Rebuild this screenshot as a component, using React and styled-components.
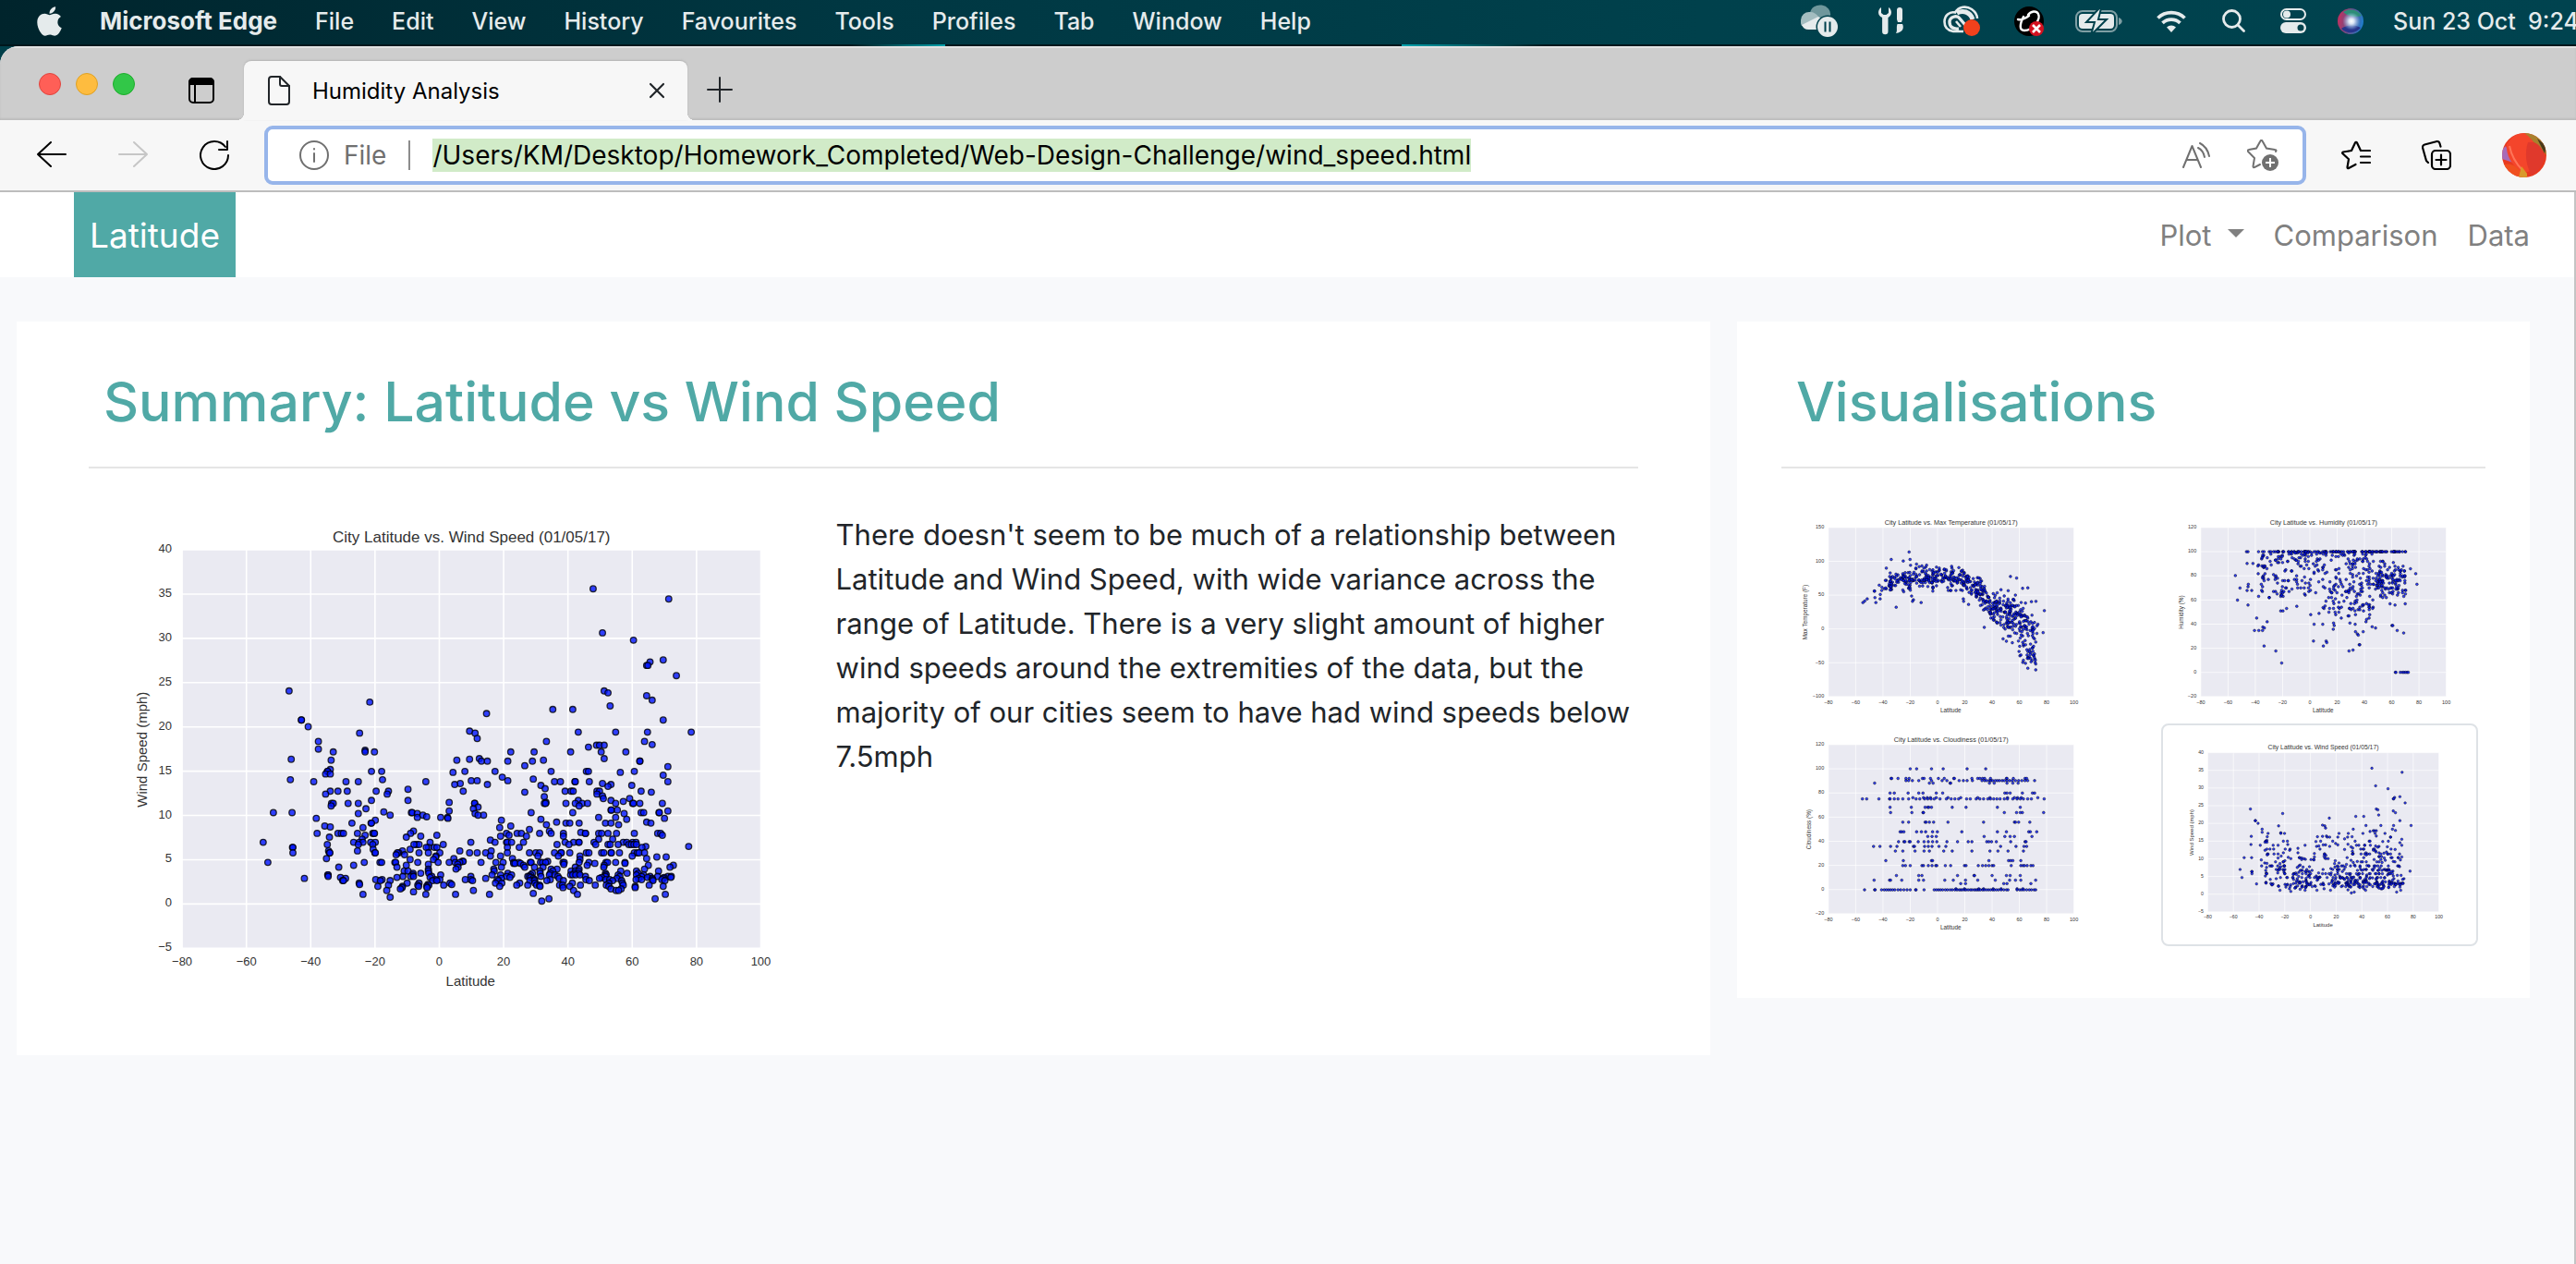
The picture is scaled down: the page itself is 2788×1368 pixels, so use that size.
import React from "react";
import styled, { createGlobalStyle } from "styled-components";
import { FaApple } from "react-icons/fa";

const GlobalStyle = createGlobalStyle`
  *, *::before, *::after { box-sizing: border-box; }
  body {
    margin: 0;
    background: #003f49;
    font-family: Inter, Roboto, "Liberation Sans", sans-serif;
    color: #212529;
  }
  button { font: inherit; color: inherit; background: none; border: 0; padding: 0; cursor: pointer; }
  svg { display: block; flex: none; }
`;

/* ---------- macOS menu bar ---------- */

const Desktop = styled.div`
  display: flex;
  flex-direction: column;
  min-height: 100vh;
`;

const MenuBar = styled.header`
  display: flex;
  align-items: center;
  height: 50px;
  padding: 0 0 5px 40px;
  overflow: hidden;
  color: #e5ebec;
  font-size: 25px;
  background:
    linear-gradient(90deg, #00171c 0 33%, #00a3ad 36.7%, #00171c 36.7% 54.4%, #00a3ad 54.4%, #00171c 60%) bottom / 100% 2px no-repeat,
    linear-gradient(90deg, #00242c, #003742 33%, #00414c 66%, #00434f);
`;

const MenuList = styled.nav`
  display: flex;
  align-items: center;
  gap: 41px;
`;

const MenuItem = styled.button`
  font-size: ${(p) => (p.$strong ? "26px" : "25px")};
  font-weight: ${(p) => (p.$strong ? 700 : 500)};
  white-space: nowrap;
`;

const AppleLogo = styled(FaApple)`
  width: 27px;
  height: 36px;
`;

const StatusArea = styled.div`
  display: flex;
  align-items: center;
  flex: none;
  margin-left: auto;
`;

const StatusIcons = styled.div`
  display: flex;
  align-items: center;
  gap: 34px;
  margin-right: 32px;
`;

const Clock = styled.time`
  width: 198px;
  overflow: hidden;
  white-space: pre;
  font-weight: 500;
`;

/* ---------- Browser chrome ---------- */

const BrowserWindow = styled.div`
  display: flex;
  flex-direction: column;
  flex: 1;
  overflow: hidden;
  border-top-left-radius: 20px;
  background: #f8f9fb;
`;

const TabStrip = styled.div`
  display: flex;
  align-items: flex-end;
  height: 80px;
  background: #cdcdcd;
  box-shadow: inset 0 2px 0 #e2e2e2, inset 0 -2px 2px #bdbdbd;
`;

const TrafficLights = styled.div`
  display: flex;
  gap: 16px;
  padding: 0 58px 27px 42px;
`;

const Light = styled.button`
  width: 24px;
  height: 24px;
  border-radius: 50%;
  background: ${(p) => p.$fill};
  border: 1px solid ${(p) => p.$ring};
`;

const StripButton = styled.button`
  display: flex;
  padding: ${(p) => p.$pad};
`;

const Tab = styled.div`
  position: relative;
  display: flex;
  align-items: center;
  width: 480px;
  height: 64px;
  padding: 0 24px 0 26px;
  border-radius: 8px 8px 0 0;
  background: #f7f7f7;
  box-shadow: 0 -1px 2px #b4b4b4;
  &::before, &::after {
    content: "";
    position: absolute;
    bottom: 0;
    width: 8px;
    height: 8px;
  }
  &::before { left: -8px; background: radial-gradient(circle at 0 0, transparent 8px, #f7f7f7 8px); }
  &::after { right: -8px; background: radial-gradient(circle at 100% 0, transparent 8px, #f7f7f7 8px); }
`;

const TabTitle = styled.span`
  flex: 1;
  padding-left: 24px;
  color: #000;
  font-size: 24px;
  white-space: nowrap;
`;

const Toolbar = styled.div`
  display: flex;
  align-items: center;
  height: 78px;
  padding: 0 32px 0 40px;
  background: #f7f7f7;
  border-bottom: 2px solid #bdbdbd;
  color: #000;
`;

const ToolGroup = styled.div`
  display: flex;
  align-items: center;
  gap: ${(p) => p.$gap};
`;

const AddressBar = styled.div`
  display: flex;
  align-items: center;
  flex: 1;
  height: 64px;
  margin: 0 38px;
  padding: 0 26px 0 34px;
  border: 4px solid #97b5ea;
  border-radius: 9px;
  background: #fff;
  color: #707070;
  font-size: 28px;
`;

const Scheme = styled.span`
  margin: 0 24px 0 16px;
  padding-right: 24px;
  border-right: 2px solid #8c8c8c;
  line-height: 32px;
`;

const UrlInput = styled.input`
  field-sizing: content;
  max-width: 100%;
  height: 36px;
  margin-right: auto;
  padding: 0;
  border: 0;
  outline: 0;
  background: #d1ebc8;
  color: #000;
  font: inherit;
  font-size: 28px;
`;

const Avatar = styled.button`
  display: flex;
  border-radius: 50%;
  overflow: hidden;
`;

/* ---------- Web page ---------- */

const Page = styled.div`
  flex: 1;
  border-right: 2px solid #c4c4c4;
  background: #f8f9fb;
`;

const Navbar = styled.nav`
  display: flex;
  justify-content: space-between;
  height: 92px;
  padding: 0 48px 0 80px;
  background: #fff;
`;

const Brand = styled.a`
  display: flex;
  align-items: center;
  padding: 0 17px;
  background: #50a9a6;
  color: #fff;
  font-size: 37px;
  text-decoration: none;
`;

const NavLinks = styled.div`
  display: flex;
  align-items: center;
  gap: 32px;
  color: #808080;
  font-size: 31px;
`;

const NavLink = styled.a`
  color: inherit;
  text-decoration: none;
`;

const NavDropdown = styled.button`
  display: flex;
  align-items: center;
  gap: 17px;
  &::after {
    content: "";
    margin-bottom: 4px;
    border: 9px solid transparent;
    border-top-color: currentColor;
    border-bottom: 0;
  }
`;

const Content = styled.main`
  display: grid;
  grid-template-columns: 47fr 22fr;
  align-items: start;
  gap: 29px;
  padding: 48px 48px 48px 18px;
`;

const Card = styled.section`
  padding: ${(p) => p.$pad};
  background: #fff;
`;

const CardTitle = styled.h1`
  margin: 0;
  padding: 0 16px 32px;
  border-bottom: 2px solid #e5e5e5;
  color: #50a9a6;
  font-size: 59px;
  font-weight: 500;
  line-height: 77px;
  white-space: nowrap;
`;

const SummaryBody = styled.div`
  display: grid;
  grid-template-columns: 27fr 29fr;
  align-items: start;
  padding-top: 34px;
`;

const SummaryText = styled.p`
  margin: 0;
  padding-top: 14px;
  font-size: 31px;
  line-height: 48px;
`;

const Gallery = styled.div`
  display: grid;
  grid-template-columns: 1fr 1fr;
  align-items: start;
  gap: 6px 60px;
  padding: 41px 8px 0;
`;

const PlotLink = styled.a`
  display: block;
  ${(p) => p.$current && `
    padding: 8px 8px 14px;
    border: 2px solid #dee2e6;
    border-radius: 8px;
  `}
`;

const ChartSvg = styled.svg`
  width: 100%;
  height: auto;
  font-family: "Liberation Sans", Arial, sans-serif;
  fill: #333;
`;

/* ---------- Plot data ---------- */

// Rows map a vertical grid position to the horizontal grid positions on it.
const expand = (rows) =>
  rows.split(";").flatMap((row) => {
    const [y, xs] = row.trim().split(":");
    return xs.split(",").map((x) => [Number(x), Number(y)]);
  });

// Park-Miller generator, so that the jitter is the same on every render.
const randomFrom = (seed) => () => {
  seed = (seed * 16807) % 2147483647;
  return seed / 2147483647;
};

const wind = {
  frame: [148, 1511, 132, 1380],
  points: expand(`254:1116;286:1294;392:1138;415:1211;477:1281;483:1250;494:1242,1245;526:1312;574:400,1142;580:1151;589:1242;603:1255;609:590;621:1156;
632:1021,1068;645:865;665:429,429,1281;686:445;700:825;703:1081,1169,1244,1347;706:566,838;723:843;732:469,1006,1237;742:1255;744:1124,1131,1142;
750:1105;756:469;760:579;765:504,579,601,922,977,1063,1135,1193;788:405,825;786:848,1142;791:499,795,999;794:853,867,915,973,1226,1226;808:955;811:1292;
820:497;826:490,491,594,618,814,885,1017,1100,1105,1213;829:786,1180;834:486,497;838:1281;844:902;850:975;852:403,620;855:829,843,915;
858:458,534,563,722,1025,1039,1073,1074,1107,1292;864:803,1138;867:790,867,1158;870:993,1207;873:1151;880:1003;882:680;
888:497,515,537,605,634,810,1050,1064,1069,1125,1131,1229;891:955,1253;897:486,631,1125;903:1138;905:1001;911:1202,1140;917:594,680,1081,1158;920:1187;
923:777,1005;926:500,504,539,563,837,837,1001,1004,1052,1074,1090,1103,1169,1209,1211,1226,1279;934:499,1083;938:845;943:581,834;947:1158,1159,1173;950:777,1292;953:623;
955:363,407,688,690,970,1068,1229,1235,1271,1272;958:563,702,838,1189;963:638,715,858,845;968:724;970:757,773,702,1129,1169;973:464,774,1284;976:993,1195;
979:603,900;985:1030,1242;988:548,593,594,1052,1061,1083,1145,1158,1252;993:1006,1176;997:484,922;1000:497;1002:574,896;1008:966;1013:693,1013;1017:1087;
1020:466,515,523,528,561,597,600,601,686,912,937,947,990,1017,1046,1098,1098,1129,1136,1151,1171,1213,1268,1275;1026:579,748,918,1279;1029:710,898,959,1046;
1032:495,676;1038:572,1129,1162;1041:874;1048:339,552,565,574,592,603,732,828,885,912,914,924,952,1050,1070,1082,1083,1118,1187,1195,1209,1217;
1055:490,563,597,700,706,763,694,1031,1059,1122,1151,1156,1175,1200,1206,1212,1218;1061:1341,1240;1064:408,409,728,742,748,723,914,942,1231;1070:598,685;1075:493,561,667,802,876;
1081:409,495,496,602,603,658,655,706,728,755,825,843,863,914,966,981,990,1025,1040,1041,1061,1100,1106,1136,1141,1158,1159,1178,1213,1220,1224,1237;
1087:652,672;1091:746,874,898,986,1034,1085,1208;1094:1288,1266,745;1099:488,788,926,1242;1102:685,740,1085;1108:808,810,1009;
1111:350,577,614,618,649,651,703,751,777,791,802,852,887,904,929,941,968,970,992,997,1004,1045,1048,1083,1106,1146,1150,1169,1191;1114:929,932,945,1191,1120;
1117:728,797,1047;1120:552,676,952,1102,1142,1246,1305;1126:517,654,798,900,955,978,998,1074,1141,1297;1132:793,882,1017,1031,1083,1237,728;
1138:671,680,728,883,991,1021,1064,1074,1082,1181,1218,1270;1145:710,729,915,973,991,1015,1072,1082,1145,1196,1222,692;
1150:491,492,691,757,878,898,924,969,1013,1026,1063,1068,1075,1085,1145,1147,1175,1218,1235;1155:492,668,686,693,736,828,912,962,966,993,1033,1098,1145,1179,1230,1250,1268,1292,1300;
1158:521,654,732,920,969,1136,1244,1283,1299;1161:436,533,863,900,975,1036,1131,1172,1223,1281,1255;1165:604,619,745,755,815,828,890,978,1015,1099,1146,1155,1217,1230,1256,1278;
1168:526,528,615,638,738,748,832,893,967,978,1007,1046,1107,1162,1183,1257,1285;1176:565,678,706,779,886,901,943,979,1067,1153,1185;
1180:566,727,783;1182:634,703,729,764,936,962,983,990,1037,1044,1086,1121,1147,1187,1248;1186:609,667,705,724,896,991,1061,1153,1215,1281;1190:666,725,1045,1215;1194:662,1158,1182;
1199:630,1070,1170,1176,834;1203:693;1208:975;1211:574,722,792,872,1079,1286;1220:638;1225:1012,1262;1232:995`),
};

const latitudes = wind.points.map(([x]) => (x - 148) / 7.572 - 80);

const interpolate = (stops, at) => {
  const i = Math.max(1, stops.findIndex(([x]) => x >= at));
  const [x0, a0, b0] = stops[i - 1];
  const [x1, a1, b1] = stops[i];
  const t = (at - x0) / (x1 - x0);
  return [a0 + (a1 - a0) * t, b0 + (b1 - b0) * t];
};

const temperature = (() => {
  const rand = randomFrom(42);
  const trend = [
    [-60, 40, 6], [-47, 55, 8], [-35, 68, 16], [-22, 76, 20], [-8, 76, 20], [0, 78, 16], [18, 76, 18], [28, 62, 22],
    [34, 46, 30], [42, 32, 32], [50, 22, 36], [58, 12, 44], [66, 4, 60], [72, -12, 64], [80, 5, 30],
  ];
  const spread = latitudes
    .filter((lat) => lat > -42 && lat < 73)
    .map((lat) => {
      const [mid, range] = interpolate(trend, lat);
      const noise = (rand() + rand() + rand()) / 1.5 - 1;
      return [120 + (lat + 80) * 4.428, 389.5 - (mid + noise * range * 1.2) * 2.18];
    });
  const outliers = expand(`141:382;165:324,385;170:363;180:406;193:308,404,430,480;248:285;265:293;267:270,269,459;288:271;304:274,232,421;292:246,288,558;299:238;
319:340;283:390;295:396;300:393,559;310:575;384:626;220:711;225:731;280:727;330:821;401:817;374:800;379:797;521:793;502:793;497:791,751;480:788,768,772;
490:753,781;495:778;421:687;473:745,765,784;445:741,786;440:760;265:509,516,518,534,555;250:520;461:773,784;411:769,782;484:766,770,776;428:737;432:751`);
  return { frame: [120, 917, 62, 607], points: [...spread, ...outliers] };
})();

const humidity = (() => {
  const rand = randomFrom(97);
  const saturated = latitudes
    .filter((lat, i) => lat > -30 && lat < 73 && i % 5 === 0)
    .map((lat) => [110 + (lat + 80) * 4.417, 140]);
  const spread = latitudes
    .filter((lat, i) => lat > -38 && lat < 71 && i % 4 !== 0)
    .map((lat) => {
      const r = rand();
      const low = lat < 8 ? Math.pow(r, lat < -14 ? 1 : 1.7) * 38 : lat < 48 ? r * 50 : 7 + rand() * 16 + r * 18;
      return [110 + (lat + 80) * 4.417, 140 + Math.round(low) * 3.89];
    });
  const listed = expand(`140:258,263,297,310,315,337;178:260,279;186:295,308,313,317;211:296,318;217:222;257:237;296:229;312:263;354:291,565,655;394:284,298,310,746;383:311;
386:316,676;366:325,645;444:315,507;460:353,590;499:372;331:369,376,637;323:388;316:421;265:260,275;245:264,810;253:263;343:466,547,611,657;
374:477,505,610;428:475,516;433:518;339:493;320:506;335:525,545,557;370:540,593;378:542,729,732;390:539;398:611,636;405:617;409:620;402:767;440:623,625;
457:603;327:625;382:665;358:647;211:806;195:789;308:772,723;312:739;347:587,590;529:740,742,756,763,768,773,778,782`);
  return { frame: [110, 905, 62, 607], points: [...saturated, ...spread, ...listed] };
})();

const cloudiness = {
  frame: [210, 672, 797, 1342],
  points: expand(`875:364,376,404,426,471,506;906:328,329,341,356,362,387,390,402,417,428,446,447,480,491,495,500,504,515,545,546,558,580,583;
913:356,361,368,380,404,424,433,456,464,471,481,499,504,508,513,516,519,524,528,532,537,541,546,551,556,562,568,574,580,585,598;
921:297,400,407,439,440,513,522,546,557,567;953:326,334,360,380,388,413,425,542,546,552,575,594,598;
968:369,389,396,402,413,435,459,491,514,547,560,566,573,604;972:274,282,305,325,326,334,341,350,361,375,382,391,397,403,409,420,432,441,448,455,470,477,488,495,502,510,515,521,527,533,541,547,557,565,571,577,585,592,616;
999:326,366,392,397,399,404,443,469,528,571;1016:327,367,388,389,541,564,571,575,615;1047:350,361,392,394,400,408,435,502,560,562,568,589;
1078:345,348,352,376,385,393,406,415,461,528,545,587,590,602;1093:397,405,413,503,542,552,560,593;1110:342,352,354,362,364,379,390,398,406,414,433,453,473,480,508,512,517,526,553,580,582;
1125:295,307,327,339,370,372,391,398,405,418,431,534,563,578,583;1140:336,350,373,390,400,427,443,480,514,529,548,577;1171:318,351,404,406,512,549,553,557,572;
1187:350,355,364,386,389,398,405,412,414,430,440,466,469,492,500,506,512,518,521,554,572,576,579,584,591,595;1219:338,380,386,453,484,485,518,545,552,571;
1234:296,325,327,348,380,389,429,445,468,491,524,551,562,572,600;1245:459,468,540,546,591;1262:450,466,493,502,520,535,565,576;
1265:278,297,298,310,315,319,323,327,331,335,341,346,352,358,364,374,375,390,409,413,417,421,425,430,434,439,443,448,452,456,459,462,466,469,473,477,480,484,487,490,493,496,500,503,507,511,515,519,522,526,530,535,540,545,548,565,570,574,578,583,588,592,597,600`),
};

const LAT_TICKS = [-80, -60, -40, -20, 0, 20, 40, 60, 80, 100];
const range = (from, to, step) =>
  Array.from({ length: (to - from) / step + 1 }, (_, i) => from + i * step);

const PLOTS = {
  temperature: { data: temperature, name: "Max Temperature", label: "Max Temperature (F)", labelX: 46, ticks: range(-100, 150, 50) },
  humidity: { data: humidity, name: "Humidity", label: "Humidity (%)", labelX: 56, ticks: range(-20, 120, 20) },
  cloudiness: { data: cloudiness, name: "Cloudiness", label: "Cloudiness (%)", labelX: 56, ticks: range(-20, 120, 20) },
  wind: { data: wind, name: "Wind Speed", label: "Wind Speed (mph)", labelX: 63, ticks: range(-5, 40, 5) },
};

const AREA = { x: 101, y: 54, w: 626, h: 431 };
const minus = (n) => String(n).replace("-", "−");

function ScatterPlot({ plot }) {
  const { data, name, label, labelX, ticks } = plot;
  const [x0, x1, y0, y1] = data.frame;
  const px = (x) => AREA.x + ((x - x0) / (x1 - x0)) * AREA.w;
  const py = (y) => AREA.y + ((y - y0) / (y1 - y0)) * AREA.h;
  const last = ticks.length - 1;
  return (
    <ChartSvg viewBox="0 0 808 539" role="img" aria-label={`City Latitude vs. ${name}`}>
      <rect x={AREA.x} y={AREA.y} width={AREA.w} height={AREA.h} fill="#eaeaf2" />
      <g stroke="#fff" strokeWidth="1.6">
        {LAT_TICKS.map((t, i) => {
          const x = AREA.x + (i / 9) * AREA.w;
          return <line key={t} x1={x} x2={x} y1={AREA.y} y2={AREA.y + AREA.h} />;
        })}
        {ticks.map((t, i) => {
          const y = AREA.y + AREA.h - (i / last) * AREA.h;
          return <line key={t} x1={AREA.x} x2={AREA.x + AREA.w} y1={y} y2={y} />;
        })}
      </g>
      <g fill="#0014ff" fillOpacity="0.8" stroke="#000" strokeOpacity="0.8" strokeWidth="1.3">
        {data.points.map(([x, y], i) => (
          <circle key={i} cx={px(x)} cy={py(y)} r="3.3" />
        ))}
      </g>
      <g fontSize="13" textAnchor="middle">
        {LAT_TICKS.map((t, i) => (
          <text key={t} x={AREA.x + (i / 9) * AREA.w} y="504">{minus(t)}</text>
        ))}
      </g>
      <g fontSize="13" textAnchor="end">
        {ticks.map((t, i) => (
          <text key={t} x="90" y={AREA.y + AREA.h - (i / last) * AREA.h + 3}>{minus(t)}</text>
        ))}
      </g>
      <g textAnchor="middle">
        <text x="414" y="46" fontSize="17">{`City Latitude vs. ${name} (01/05/17)`}</text>
        <text x="413" y="526" fontSize="15">Latitude</text>
        <text transform={`translate(${labelX} 270) rotate(-90)`} fontSize="15">{label}</text>
      </g>
    </ChartSvg>
  );
}

/* ---------- Icons ---------- */

const Line = ({ w, h, box, width = 2, children }) => (
  <svg width={w} height={h} viewBox={box || `0 0 ${w} ${h}`} fill="none" stroke="currentColor"
    strokeWidth={width} strokeLinecap="round" strokeLinejoin="round" aria-hidden="true">
    {children}
  </svg>
);

const CloudPausedIcon = () => (
  <svg width="50" height="36" viewBox="0 0 50 36" aria-hidden="true">
    <path d="M10 9a11 10 0 0 1 22 3v4L20 19z" fill="#6f979c" />
    <path d="M0 17a9 9 0 0 1 10-9c4 0 7 2 9 5l-7 7-11 3a9 9 0 0 1-1-6z" fill="#a3bdc0" />
    <path d="M1 22l18-9 10 7v7H9a8 8 0 0 1-8-5z" fill="#e5ebec" />
    <circle cx="29" cy="24" r="12.5" fill="#00414c" />
    <circle cx="29" cy="24" r="11" fill="#e5ebec" />
    <path d="M26.500 18.500v11M31.500 18.500v11" stroke="#00414c" strokeWidth="2" />
  </svg>
);

const ToolsIcon = () => (
  <svg width="36" height="30" viewBox="0 0 36 30" fill="#e5ebec" aria-hidden="true">
    <path d="M3 0v6l2.500 2h3L11 6V0c2 1 3 3.500 3 5.500C14 8.500 12 10 10.500 11v15a3.200 3.200 0 0 1-6.400 0V11C2 10 0 8.500 0 5.500 0 3.500 1 1 3 0z" />
    <path d="M20 3a3 3 0 0 1 6 0v10l-1 3h-4l-1-3zM20.500 18h5.500c2 4 .5 9-7 10 2-3 0-6 1.500-10z" />
  </svg>
);

const CreativeCloudIcon = () => (
  <svg width="43" height="34" viewBox="0 0 43 34" aria-hidden="true">
    <g fill="none" stroke="#e5ebec" strokeWidth="2.600">
      <path d="M22 28H11C5 27 1.500 23 1.500 17.500 1.500 11 7 6 13 7.500 17 1 25 0 31 4c4 3 6 6 6 10" />
      <path d="M17 25c-6 1-10-2-10-7 0-6 8-8 11-4l6 7" strokeWidth="3.400" />
      <path d="M15 8c6-3 14-2 17 7" strokeWidth="5" />
      <path d="M14 17l5 6" />
    </g>
    <circle cx="31" cy="24" r="9" fill="#f2411c" />
  </svg>
);

const BlockedAppIcon = () => (
  <svg width="32" height="32" viewBox="0 0 32 32" aria-hidden="true">
    <circle cx="16" cy="16" r="16" fill="#000" />
    <path d="M4 14c4 1 8-1 12-4M10 11c-4 8-5 15 1 15 9 0 18-12 15-18-2-4-8-3-11 1" fill="none" stroke="#fff" strokeWidth="2.400" strokeLinecap="round" />
    <circle cx="24" cy="24" r="8" fill="#d4101f" />
    <path d="M20 20l8 8M28 20l-8 8" stroke="#fff" strokeWidth="2.600" />
  </svg>
);

const BatteryIcon = () => (
  <svg width="54" height="26" viewBox="0 0 54 26" aria-hidden="true">
    <rect x="1" y="2" width="44" height="22" rx="7" fill="none" stroke="#7f9fa4" strokeWidth="2" />
    <rect x="4" y="5" width="38" height="16" rx="4" fill="#e5ebec" />
    <path d="M47 9c5 2 5 6 0 8z" fill="#7f9fa4" />
    <path d="M26-1L12 14h9l-4 14 17-17h-9l3-12z" fill="#e5ebec" stroke="#00414c" strokeWidth="2" />
  </svg>
);

const WifiIcon = () => (
  <svg width="37" height="24" viewBox="0 0 37 24" fill="none" stroke="#e5ebec" strokeWidth="3.800" aria-hidden="true">
    <path d="M1.500 8.500a21 21 0 0 1 29 0M6.500 13.800a14 14 0 0 1 19 0" />
    <path d="M16 24l-5-5.500a7.500 7.500 0 0 1 10 0z" fill="#e5ebec" stroke="none" />
  </svg>
);

const SearchIcon = () => (
  <Line w={29} h={25} width={2.8}><circle cx="10.500" cy="10.500" r="9" /><path d="M17.500 17.500l6 6" /></Line>
);

const ControlCentreIcon = () => (
  <svg width="28" height="27" viewBox="0 0 28 27" aria-hidden="true">
    <rect x="1" y="1" width="26" height="11" rx="5.500" fill="none" stroke="#e5ebec" strokeWidth="2" />
    <circle cx="7" cy="6.500" r="4" fill="#e5ebec" />
    <rect y="15" width="28" height="12" rx="6" fill="#e5ebec" />
    <circle cx="22" cy="21" r="3.500" fill="#00414c" />
  </svg>
);

const SiriIcon = () => (
  <svg width="28" height="28" viewBox="0 0 28 28" aria-hidden="true">
    <defs>
      <radialGradient id="siriCore" cx="0.5" cy="0.5" r="0.4">
        <stop offset="0" stopColor="#fff" /><stop offset="0.300" stopColor="#e8f4ff" stopOpacity="0.9" /><stop offset="1" stopColor="#9fd0ff" stopOpacity="0" />
      </radialGradient>
      <linearGradient id="siriBase" x1="0" y1="0.400" x2="1" y2="0.600">
        <stop offset="0" stopColor="#c4305f" /><stop offset="0.450" stopColor="#6c4f86" /><stop offset="1" stopColor="#1c7fd0" />
      </linearGradient>
    </defs>
    <circle cx="14" cy="14" r="14" fill="url(#siriBase)" />
    <path d="M6 4a14 14 0 0 1 20 4c-6 2-13 2-20-4z" fill="#2e8d78" />
    <path d="M4 22c6-4 14-5 21-1a14 14 0 0 1-21 1z" fill="#27358c" />
    <circle cx="15" cy="14" r="12" fill="url(#siriCore)" />
  </svg>
);

const TabActionsIcon = () => (
  <svg width="28" height="28" viewBox="0 0 28 28" aria-hidden="true">
    <rect x="1" y="1" width="26" height="26" rx="4" fill="none" stroke="#000" strokeWidth="2" />
    <path d="M0 8V5a5 5 0 0 1 5-5h18a5 5 0 0 1 5 5v3zM6 8h2v19H6z" />
  </svg>
);

const DocumentIcon = () => (
  <Line w={24} h={32}><path d="M4 1h9l10 10v17a3 3 0 0 1-3 3H4a3 3 0 0 1-3-3V4a3 3 0 0 1 3-3z" /><path d="M13 1v8a2 2 0 0 0 2 2h8" /></Line>
);

const ReadAloudIcon = () => (
  <Line w={30} h={28}><path d="M1 27L10.500 4 20 27M4.500 19h12M19 1c5 2.500 8.500 7 10 14M17 6c4 2 6 5 7 10" /></Line>
);

const AddFavouriteIcon = () => (
  <svg width="34" height="34" viewBox="0 0 34 34" aria-hidden="true">
    <path d="M31 13c1-1 .5-2-1-2l-9-1.500-4.500-8c-.5-1-1.500-1-2 0l-4.500 8L2 11c-1 0-1.500 1-1 2l7 7-1.500 9c0 1 .7 1.500 1.500 1l6-3" fill="none" stroke="#707070" strokeWidth="2" strokeLinecap="round" />
    <circle cx="25" cy="25" r="9" fill="#707070" />
    <path d="M25 20v10M20 25h10" stroke="#fff" strokeWidth="2" />
  </svg>
);

const FavouritesIcon = () => (
  <Line w={32} h={32} width={2.2}>
    <path d="M31 11H21l-4-8.500c-.5-1-1.500-1-2 0L11 11l-9 1.500c-1 .3-1 1-.5 1.800l6.500 6L6.500 29c0 1 .7 1.500 1.500 1l7.500-4M21 17.500h10M21 24h10" />
  </Line>
);

const CollectionsIcon = () => (
  <Line w={32} h={32} width={2.2}>
    <rect x="11" y="11" width="20" height="20" rx="4" /><path d="M21 15.500v11M15.500 21h11" />
    <path d="M7 24L5 22 1.200 8.500a3 3 0 0 1 2-4L15.500 1.200a3 3 0 0 1 4 2l1 3.500" />
  </Line>
);

const TulipAvatar = () => (
  <svg width="48" height="48" viewBox="0 0 48 48" aria-hidden="true">
    <rect width="48" height="48" fill="#e8391f" />
    <path d="M24 0h24v24C42 16 34 10 24 0z" fill="#a8812e" />
    <path d="M38 6l8 16 2-8z" fill="#4a3a1c" />
    <path d="M0 18l4-4 8 18-12-4z" fill="#a86bb8" />
    <path d="M5 12C10 4 16 0 24 0c12 8 18 22 15 38L22 44C10 34 4 24 5 12z" fill="#f4452b" />
    <path d="M28 10c10-2 16 6 18 16-2 10-8 16-14 20-6-10-8-24-4-36z" fill="#e0392c" />
    <path d="M8 14c2 10 6 18 14 26" fill="none" stroke="#ff7458" strokeWidth="2" />
    <path d="M2 34c8-2 14 2 18 8l3-6 4 8v4H12C8 46 4 42 2 34z" fill="#f0501f" />
    <path d="M18 48l3-12 6 8v4z" fill="#d99a2b" />
  </svg>
);

/* ---------- App ---------- */

const MENUS = ["File", "Edit", "View", "History", "Favourites", "Tools", "Profiles", "Tab", "Window", "Help"];
const URL_TEXT = "/Users/KM/Desktop/Homework_Completed/Web-Design-Challenge/wind_speed.html";

export default function App() {
  return (
    <Desktop>
      <GlobalStyle />
      <MenuBar>
        <MenuList aria-label="Menu bar">
          <MenuItem aria-label="Apple menu"><AppleLogo /></MenuItem>
          <MenuItem $strong>Microsoft Edge</MenuItem>
          {MENUS.map((name) => <MenuItem key={name}>{name}</MenuItem>)}
        </MenuList>
        <StatusArea>
          <StatusIcons>
            <CloudPausedIcon />
            <ToolsIcon />
            <CreativeCloudIcon />
            <BlockedAppIcon />
            <BatteryIcon />
            <WifiIcon />
            <SearchIcon />
            <ControlCentreIcon />
            <SiriIcon />
          </StatusIcons>
          <Clock>{"Sun 23 Oct  9:24"}</Clock>
        </StatusArea>
      </MenuBar>

      <BrowserWindow>
        <TabStrip>
          <TrafficLights>
            <Light aria-label="Close window" $fill="#ff5f57" $ring="#e0443e" />
            <Light aria-label="Minimise" $fill="#febc3f" $ring="#dea123" />
            <Light aria-label="Zoom" $fill="#32c748" $ring="#1dad2b" />
          </TrafficLights>
          <StripButton aria-label="Tab actions" $pad="0 32px 18px 0"><TabActionsIcon /></StripButton>
          <Tab>
            <DocumentIcon />
            <TabTitle>Humidity Analysis</TabTitle>
            <StripButton aria-label="Close tab" $pad="0"><Line w={18} h={18} width={2.2}><path d="M2 2l14 14M16 2L2 16" /></Line></StripButton>
          </Tab>
          <StripButton aria-label="New tab" $pad="0 0 19px 21px"><Line w={28} h={28}><path d="M14 1v26M1 14h26" /></Line></StripButton>
        </TabStrip>

        <Toolbar>
          <ToolGroup $gap="56px">
            <button aria-label="Back"><Line w={32} h={32}><path d="M31 15H1M15 2L1 15l14 13" /></Line></button>
            <button aria-label="Forward" disabled><svg width="32" height="32" viewBox="0 0 32 32" fill="none" stroke="#c6c6c6" strokeWidth="2" strokeLinecap="round" strokeLinejoin="round"><path d="M1 15h30M17 2l14 13-14 13" /></svg></button>
            <button aria-label="Reload"><Line w={32} h={32}><path d="M31 16A15 15 0 1 1 28 7M30 1v9h-9" /></Line></button>
          </ToolGroup>
          <AddressBar>
            <Line w={32} h={32}><circle cx="16" cy="16" r="15" /><path d="M16 14v9M16 9v.5" /></Line>
            <Scheme>File</Scheme>
            <UrlInput aria-label="Address" defaultValue={URL_TEXT} size={URL_TEXT.length} spellCheck={false} />
            <ToolGroup $gap="40px">
              <button aria-label="Read aloud"><ReadAloudIcon /></button>
              <button aria-label="Add to favourites"><AddFavouriteIcon /></button>
            </ToolGroup>
          </AddressBar>
          <ToolGroup $gap="55px">
            <button aria-label="Favourites"><FavouritesIcon /></button>
            <button aria-label="Collections"><CollectionsIcon /></button>
            <Avatar aria-label="Profile"><TulipAvatar /></Avatar>
          </ToolGroup>
        </Toolbar>

        <Page>
          <Navbar>
            <Brand href="#home">Latitude</Brand>
            <NavLinks>
              <NavDropdown aria-haspopup="true">Plot</NavDropdown>
              <NavLink href="#comparison">Comparison</NavLink>
              <NavLink href="#data">Data</NavLink>
            </NavLinks>
          </Navbar>

          <Content>
            <Card $pad="48px 78px 62px">
              <CardTitle>Summary: Latitude vs Wind Speed</CardTitle>
              <SummaryBody>
                <ScatterPlot plot={PLOTS.wind} />
                <SummaryText>
                  There doesn't seem to be much of a relationship between Latitude and Wind Speed, with wide
                  variance across the range of Latitude. There is a very slight amount of higher wind speeds
                  around the extremities of the data, but the majority of our cities seem to have had wind
                  speeds below 7.5mph
                </SummaryText>
              </SummaryBody>
            </Card>

            <Card $pad="48px 48px 56px">
              <CardTitle as="h2">Visualisations</CardTitle>
              <Gallery>
                <PlotLink href="#temperature"><ScatterPlot plot={PLOTS.temperature} /></PlotLink>
                <PlotLink href="#humidity"><ScatterPlot plot={PLOTS.humidity} /></PlotLink>
                <PlotLink href="#cloudiness"><ScatterPlot plot={PLOTS.cloudiness} /></PlotLink>
                <PlotLink href="#wind" $current><ScatterPlot plot={PLOTS.wind} /></PlotLink>
              </Gallery>
            </Card>
          </Content>
        </Page>
      </BrowserWindow>
    </Desktop>
  );
}
